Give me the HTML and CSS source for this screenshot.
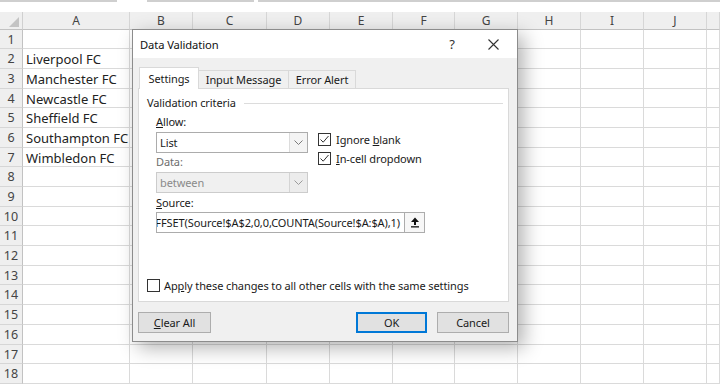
FILE: index.html
```html
<!DOCTYPE html>
<html lang="en">
<head>
    <meta charset="UTF-8">
    <title>Data Validation</title>
    <link rel="stylesheet" href="styles.css">
</head>
<body>
    <div class="topbar">
        <span class="seg seg-name"></span>
        <span class="seg seg-fx"></span>
        <span class="seg seg-formula"></span>
    </div>

    <div class="sheet" id="sheet"></div>

    <div class="dialog">
        <div class="titlebar">
            <span class="title">Data Validation</span>
            <span class="help">?</span>
            <span class="close">
                <svg width="11" height="11" viewBox="0 0 11 11"><path d="M0.5 0.5 L10.5 10.5 M10.5 0.5 L0.5 10.5" stroke="#333" stroke-width="1.1" fill="none"/></svg>
            </span>
        </div>
        <div class="dlg-body">
            <div class="tabs">
                <div class="tab active">Settings</div>
                <div class="tab tab-input">Input Message</div>
                <div class="tab tab-error">Error Alert</div>
            </div>
            <div class="panel">
                <div class="legend"><span>Validation criteria</span><span class="rule"></span></div>
                <div class="criteria">
                    <div class="criteria-top">
                        <div class="col-left">
                            <div class="lbl"><u>A</u>llow:</div>
                            <div class="combo">
                                <span class="val">List</span>
                                <span class="drop"><svg width="9" height="6" viewBox="0 0 9 6"><path d="M0.5 0.5 L4.5 4.5 L8.5 0.5" stroke="#7a7a7a" fill="none"/></svg></span>
                            </div>
                            <div class="lbl dim">Data:</div>
                            <div class="combo disabled">
                                <span class="val">between</span>
                                <span class="drop"><svg width="9" height="6" viewBox="0 0 9 6"><path d="M0.5 0.5 L4.5 4.5 L8.5 0.5" stroke="#9a9a9a" fill="none"/></svg></span>
                            </div>
                        </div>
                        <div class="col-right">
                            <div class="check">
                                <span class="box"><svg width="11" height="11" viewBox="0 0 11 11"><path d="M1.5 5.5 L4.2 8.2 L9.5 2" stroke="#333" stroke-width="1" fill="none"/></svg></span>
                                <span>Ignore <u>b</u>lank</span>
                            </div>
                            <div class="check">
                                <span class="box"><svg width="11" height="11" viewBox="0 0 11 11"><path d="M1.5 5.5 L4.2 8.2 L9.5 2" stroke="#333" stroke-width="1" fill="none"/></svg></span>
                                <span><u>I</u>n-cell dropdown</span>
                            </div>
                        </div>
                    </div>
                    <div class="lbl lbl-source"><u>S</u>ource:</div>
                    <div class="source">
                        <div class="src-field"><span>=OFFSET(Source!$A$2,0,0,COUNTA(Source!$A:$A),1)</span></div>
                        <span class="ref-btn">
                            <svg width="10" height="11" viewBox="0 0 10 11"><path d="M5 0.5 L9 5 L6 5 L6 8 L4 8 L4 5 L1 5 Z" fill="#111"/><rect x="1" y="9.2" width="8" height="1.3" fill="#111"/></svg>
                        </span>
                    </div>
                </div>
                <div class="check apply">
                    <span class="box"></span>
                    <span>Ap<u>p</u>ly these changes to all other cells with the same settings</span>
                </div>
            </div>
            <div class="buttons">
                <button class="btn btn-clear"><u>C</u>lear All</button>
                <span class="spacer"></span>
                <button class="btn btn-ok">OK</button>
                <button class="btn btn-cancel">Cancel</button>
            </div>
        </div>
    </div>

    <script>
        const cols = ['', 'A', 'B', 'C', 'D', 'E', 'F', 'G', 'H', 'I', 'J', ''];
        const teams = { 2: 'Liverpool FC', 3: 'Manchester FC', 4: 'Newcastle FC', 5: 'Sheffield FC', 6: 'Southampton FC', 7: 'Wimbledon FC' };
        const sheet = document.getElementById('sheet');

        cols.forEach(function (name, i) {
            const head = document.createElement('div');
            head.className = i === 0 ? 'corner' : 'col-head';
            if (i === 0) head.innerHTML = '<span class="tri"></span>';
            else head.textContent = name;
            sheet.appendChild(head);
        });

        for (let r = 1; r <= 18; r++) {
            const rh = document.createElement('div');
            rh.className = 'row-head';
            rh.textContent = r;
            sheet.appendChild(rh);
            for (let c = 1; c < cols.length; c++) {
                const cell = document.createElement('div');
                cell.className = 'cell';
                if (c === 1 && teams[r]) cell.textContent = teams[r];
                sheet.appendChild(cell);
            }
        }
    </script>
</body>
</html>
```

FILE: styles.css
```css
html, body {
    margin: 0;
    padding: 0;
    background-color: #ffffff;
    overflow: hidden;
}

body {
    width: 720px;
    height: 384px;
    position: relative;
    font-family: "Noto Sans", "Open Sans", sans-serif;
}

.topbar {
    height: 12px;
    display: flex;
}

.seg {
    height: 2px;
    background-color: #cfcfcf;
}

.seg-name { width: 117px; }
.seg-fx { width: 107px; margin-left: 30px; }
.seg-formula { flex: 1; margin-left: 4px; }

.sheet {
    display: grid;
    grid-template-columns: 23px 107px 63px 74px 63px 63px 62px 63px 63px 63px 63px 13px;
    grid-template-rows: 17.5px repeat(18, 19.7px);
    color: #222222;
}

.corner, .col-head, .row-head, .cell {
    box-sizing: border-box;
    overflow: hidden;
    white-space: nowrap;
}

.corner {
    background-color: #efefef;
    border-right: 1px solid #d0d0d0;
    border-bottom: 1px solid #c2c2c2;
    position: relative;
}

.corner .tri {
    position: absolute;
    right: 3px;
    bottom: 2px;
    width: 0;
    height: 0;
    border-left: 10px solid transparent;
    border-bottom: 10px solid #c4c4c4;
}

.col-head {
    background-color: #efefef;
    border-right: 1px solid #d6d6d6;
    border-bottom: 1px solid #c2c2c2;
    color: #444444;
    font-size: 12px;
    line-height: 18px;
    text-align: center;
}

.row-head {
    background-color: #efefef;
    border-right: 1px solid #c2c2c2;
    border-bottom: 1px solid #d6d6d6;
    color: #444444;
    font-size: 12.5px;
    line-height: 19px;
    text-align: center;
}

.cell {
    border-right: 1px solid #dadada;
    border-bottom: 1px solid #dadada;
    font-size: 13px;
    line-height: 20px;
    padding-left: 3px;
}

/* dialog */

.dialog {
    position: absolute;
    left: 132px;
    top: 29px;
    width: 386px;
    height: 313px;
    box-sizing: border-box;
    border: 1px solid #8c8c8c;
    background-color: #f0f0f0;
    box-shadow: 6px 6px 18px rgba(0, 0, 0, 0.3);
    font-size: 11px;
    letter-spacing: -0.1px;
    color: #1a1a1a;
}

.titlebar {
    height: 28px;
    background-color: #ffffff;
    display: flex;
    align-items: center;
    padding-left: 7px;
}

.title {
    flex: 1;
    font-size: 11.2px;
    color: #111111;
}

.help {
    width: 14px;
    text-align: center;
    font-size: 13px;
    color: #333333;
    margin-right: 29px;
}

.close {
    display: flex;
    margin-right: 18px;
}

.dlg-body {
    padding: 9px 8px 0 5px;
}

.tabs {
    display: flex;
    align-items: flex-end;
    height: 21px;
    padding-left: 1px;
}

.tab {
    box-sizing: border-box;
    height: 18px;
    line-height: 17px;
    text-align: center;
    border-top: 1px solid #d9d9d9;
    border-right: 1px solid #d9d9d9;
    background-color: #f0f0f0;
}

.tab.active {
    width: 60px;
    height: 22px;
    line-height: 21px;
    margin-bottom: -1px;
    border-left: 1px solid #d9d9d9;
    background-color: #ffffff;
    position: relative;
    z-index: 1;
}

.tab-input { width: 90px; }
.tab-error { width: 67px; }

.panel {
    box-sizing: border-box;
    height: 214px;
    background-color: #ffffff;
    border: 1px solid #d9d9d9;
    padding: 7px 5px 9px 8px;
    display: flex;
    flex-direction: column;
}

.legend {
    display: flex;
    align-items: center;
    height: 14px;
    line-height: 14px;
}

.legend .rule {
    flex: 1;
    height: 1px;
    background-color: #dcdcdc;
    margin-left: 8px;
}

.criteria {
    margin-left: 9px;
    margin-top: 5px;
}

.criteria-top {
    display: flex;
}

.col-left {
    width: 152px;
}

.lbl {
    height: 14px;
    line-height: 14px;
}

.lbl.dim {
    color: #6d6d6d;
    margin-top: 2px;
}

.lbl-source {
    margin-top: 3px;
}

.combo {
    box-sizing: border-box;
    height: 21px;
    margin-top: 3px;
    border: 1px solid #acacac;
    background-color: #ffffff;
    display: flex;
}

.combo .val {
    flex: 1;
    padding-left: 3px;
    line-height: 19px;
}

.combo .drop {
    width: 17px;
    border-left: 1px solid #dcdcdc;
    background-color: #f4f4f4;
    display: flex;
    align-items: center;
    justify-content: center;
}

.combo.disabled {
    border-color: #cccccc;
    background-color: #f0f0f0;
    color: #8a8a8a;
}

.combo.disabled .drop {
    background-color: #ececec;
    border-left-color: #d4d4d4;
}

.col-right {
    margin-left: 10px;
    padding-top: 18px;
    display: flex;
    flex-direction: column;
    gap: 6px;
}

.check {
    display: flex;
    align-items: center;
    height: 13px;
    gap: 5px;
}

.box {
    box-sizing: border-box;
    width: 13px;
    height: 13px;
    border: 1px solid #333333;
    background-color: #ffffff;
    display: flex;
    align-items: center;
    justify-content: center;
}

.source {
    display: flex;
    margin-top: 2px;
    height: 21px;
}

.src-field {
    box-sizing: border-box;
    width: 249px;
    border: 1px solid #acacac;
    display: flex;
    justify-content: flex-end;
    overflow: hidden;
    white-space: nowrap;
    padding-right: 4px;
    line-height: 19px;
}

.ref-btn {
    box-sizing: border-box;
    width: 20px;
    border: 1px solid #acacac;
    border-left: none;
    background-color: #f7f7f7;
    display: flex;
    align-items: center;
    justify-content: center;
}

.apply {
    margin-top: auto;
    gap: 4px;
}

.buttons {
    display: flex;
    margin-top: 10px;
    gap: 10px;
}

.spacer {
    flex: 1;
}

.btn {
    box-sizing: border-box;
    height: 21px;
    padding: 0;
    border: 1px solid #adadad;
    background-color: #e1e1e1;
    font-family: inherit;
    font-size: 11px;
    letter-spacing: -0.1px;
    color: #1a1a1a;
}

.btn-clear { width: 73px; }
.btn-ok { width: 71px; border: 2px solid #0078d7; }
.btn-cancel { width: 72px; }
```
